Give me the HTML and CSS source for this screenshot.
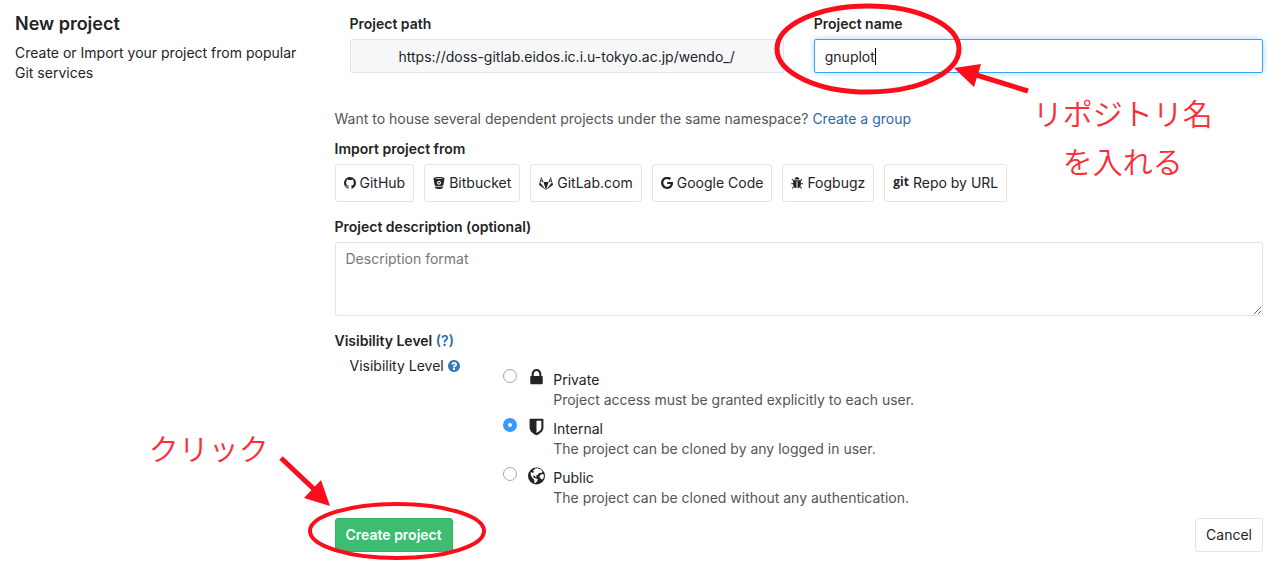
FILE: index.html
```html
<!DOCTYPE html>
<html lang="en">
<head>
<meta charset="utf-8">
<meta name="viewport" content="width=device-width, initial-scale=1">
<title>New project</title>
<link rel="stylesheet" href="styles.css">
</head>
<body>
<main class="page">
  <aside class="intro">
    <h1 class="intro-title">New project</h1>
    <p class="intro-text">Create or Import your project from popular Git services</p>
  </aside>
  <form class="form">
    <div class="fields">
      <div class="field">
        <label class="label" for="path">Project path</label>
        <input class="input input-path" id="path" type="text" value="https://doss-gitlab.eidos.ic.i.u-tokyo.ac.jp/wendo_/" readonly>
      </div>
      <div class="field field-name">
        <label class="label" for="name">Project name</label>
        <input class="input input-active" id="name" type="text" value="gnuplot">
        <span class="caret"></span>
        <svg class="mark mark-name" width="270" height="110" viewBox="0 0 270 110" aria-hidden="true">
          <ellipse class="ring" cx="95" cy="49" rx="91" ry="43"/>
          <path class="shaft" d="M255 91L200 74"/>
          <path class="head" d="M181 68L208 64L201 87Z"/>
        </svg>
        <p class="note note-name" lang="ja">リポジトリ名<br>を入れる</p>
      </div>
    </div>
    <p class="hint">Want to house several dependent projects under the same namespace? <a class="link" href="#group">Create a group</a></p>
    <h2 class="label">Import project from</h2>
    <div class="imports">
      <button class="btn btn-import" type="button"><svg class="icon" viewBox="0 128 1536 1536" aria-hidden="true"><path d="M1536 896q0 251-146.500 451.500t-378.500 277.500q-27 5-39.500-7t-12.500-30v-211q0-97-52-142 57-6 102.500-18t94-39 81-66.500 53-105 20.500-150.500q0-121-79-206 37-91-8-204-28-9-81 11t-92 44l-38 24q-93-26-192-26t-192 26q-16-11-42.500-27t-83.500-38.500-86-13.500q-44 113-7 204-79 85-79 206 0 85 20.500 150t52.500 105 80.500 67 94 39 102.500 18q-40 36-49 103-21 10-45 15t-57 5-65.500-21.500-55.500-62.500q-19-32-48.500-52t-49.500-24l-20-3q-21 0-29 4.500t-5 11.500 9 14 13 12l7 5q22 10 43.500 38t31.500 51l10 23q13 38 44 61.500t67 30 69.500 7 55.500-3.500l23-4q0 38 .5 89t.5 54q0 18-13 30t-40 7q-232-77-378.500-277.500t-146.500-451.500q0-209 103-385.500t279.500-279.500 385.500-103 385.500 103 279.500 279.500 103 385.500z"/></svg>GitHub</button>
      <button class="btn btn-import" type="button"><svg class="icon" viewBox="0 0 12 12" aria-hidden="true"><path fill-rule="evenodd" d="M.5 1.500C.5.500 3 0 6 0s5.500.500 5.500 1.500L10.300 8.200C9.200 9 7.800 9.300 6 9.300S2.800 9 1.700 8.200ZM2 1.600C3 2.200 9 2.200 10 1.600 9 1 3 1 2 1.600ZM6 3.700A2 2 0 1 0 6 7.700A2 2 0 1 0 6 3.700ZM6 4.800A.9.900 0 1 1 6 6.600A.9.900 0 1 1 6 4.800ZM1.900 9.200C3.800 10.300 8.200 10.300 10.100 9.200L9.700 11C8.500 12.300 3.500 12.300 2.300 11Z"/></svg>Bitbucket</button>
      <button class="btn btn-import" type="button"><svg class="icon icon-wide" viewBox="0 71 1792 1650" aria-hidden="true"><path d="M104 706l792 1015-868-630q-18-13-25-34.500t0-42.500zm462 0h660l-330 1015zM335 94l231 612h-198zM335 94q-8-23-33-23t-33 23l-165 612h170zM1688 706l101 308q7 21 0 42.500t-25 34.500l-868 630zM1457 94q8-23 33-23t33 23l165 612h-170zM1457 94l-231 612h198z"/></svg>GitLab.com</button>
      <button class="btn btn-import" type="button"><svg class="icon" viewBox="0 128 1505 1500" aria-hidden="true"><path d="M768 750h725q12 67 12 128 0 217-91 387.500t-259.500 266.500-386.500 96q-157 0-299-60.500t-245-163.500-163.500-245-60.500-299 60.500-299 163.500-245 245-163.500 299-60.500q300 0 515 201l-209 201q-123-119-306-119-129 0-238.500 65t-173.500 176.500-64 243.500 64 243.500 173.500 176.500 238.500 65q87 0 160-24t120-60 82-82 51.500-87 22.500-78h-436v-264z"/></svg>Google Code</button>
      <button class="btn btn-import" type="button"><svg class="icon" viewBox="32 64 1600 1600" aria-hidden="true"><path d="M1632 960q0 26-19 45t-45 19h-224q0 171-67 290l208 209q19 19 19 45t-19 45q-18 19-45 19t-45-19l-198-197q-5 5-15 13t-42 28.500-65 36.500-82 29-97 13v-896h-128v896q-51 0-101.500-13.500t-87-33-66-39-43.500-32.500l-15-14-183 207q-20 21-48 21-24 0-43-16-19-18-20.500-44.500t15.500-46.500l202-227q-58-114-58-274h-224q-26 0-45-19t-19-45 19-45 45-19h224v-294l-173-173q-19-19-19-45t19-45 45-19 45 19l173 173h844l173-173q19-19 45-19t45 19 19 45-19 45l-173 173v294h224q26 0 45 19t19 45zm-480-576h-640q0-133 93.500-226.500t226.500-93.500 226.500 93.500 93.500 226.500z"/></svg>Fogbugz</button>
      <button class="btn btn-import" type="button"><span class="git">git</span>Repo by URL</button>
    </div>
    <label class="label label-desc" for="desc">Project description (optional)</label>
    <textarea class="input textarea" id="desc" placeholder="Description format"></textarea>
    <h2 class="label label-vis">Visibility Level <a class="link" href="#help">(?)</a></h2>
    <div class="visibility">
      <div class="vis-title">Visibility Level <a class="link" href="#help" aria-label="Help"><svg class="help" viewBox="0 128 1536 1536" aria-hidden="true"><path d="M896 1376v-192q0-14-9-23t-23-9h-192q-14 0-23 9t-9 23v192q0 14 9 23t23 9h192q14 0 23-9t9-23zm256-672q0-88-55.500-163t-138.500-116-170-41q-243 0-371 213-15 24 8 42l132 100q7 6 19 6 16 0 25-12 53-68 86-92 34-24 86-24 48 0 85.500 26t37.500 59q0 38-20 61t-68 45q-63 28-115.500 86.500t-52.500 125.500v36q0 14 9 23t23 9h192q14 0 23-9t9-23q0-19 21.500-49.500t54.500-49.500q32-18 49-28.500t46-35 44.500-48 28-60.500 12.500-81zm384 192q0 209-103 385.500t-279.500 279.500-385.500 103-385.500-103-279.500-279.500-103-385.500 103-385.500 279.500-279.500 385.500-103 385.500 103 279.500 279.500 103 385.500z"/></svg></a></div>
      <div class="options">
        <div class="option">
          <input class="radio" type="radio" name="level" id="private">
          <svg class="level" viewBox="-192 128 1536 1664" aria-hidden="true"><path d="M320 768h512v-192q0-106-75-181t-181-75-181 75-75 181v192zm832 96v576q0 40-28 68t-68 28h-960q-40 0-68-28t-28-68v-576q0-40 28-68t68-28h32v-192q0-184 132-316t316-132 316 132 132 316v192h32q40 0 68 28t28 68z"/></svg>
          <label class="option-text" for="private">Private<span class="option-desc">Project access must be granted explicitly to each user.</span></label>
        </div>
        <div class="option">
          <input class="radio" type="radio" name="level" id="internal" checked>
          <svg class="level" viewBox="-128 64 1536 1664" aria-hidden="true"><path d="M1088 960v-640h-448v1137q119-63 213-137 235-184 235-360zm192-768v768q0 86-33.500 170.500t-83 150-118 127.500-126.500 103-121 77.500-89.500 49.500-42.500 20q-12 6-26 6t-26-6q-16-7-42.500-20t-89.500-49.500-121-77.500-126.500-103-118-127.500-83-150-33.500-170.500v-768q0-26 19-45t45-19h1152q26 0 45 19t19 45z"/></svg>
          <label class="option-text" for="internal">Internal<span class="option-desc">The project can be cloned by any logged in user.</span></label>
        </div>
        <div class="option">
          <input class="radio" type="radio" name="level" id="public">
          <svg class="level" viewBox="0 0 17 18" aria-hidden="true"><circle cx="8.500" cy="9" r="8.500"/><path class="land" d="M7 1.700L9.500 1.300L13 2.500L14.500 4.500L13.500 6L12 5.800L10.500 6.600L9.800 8L8 8.300L8.800 9.700L7.600 10L6.800 8.900L5.200 8.300L5.500 10.500L7.500 11.200L9.800 12L9.300 14L7.500 16.100L6.300 15.700L6.400 13L5 11.500L3.400 9.500L2.600 7L3 5L4.800 6L6 5.100L5 3.800ZM12.300 8L15 6.800L16 9L15.200 11.700L13.800 12.500L12 11L11.500 9.500Z"/></svg>
          <label class="option-text" for="public">Public<span class="option-desc">The project can be cloned without any authentication.</span></label>
        </div>
      </div>
    </div>
    <div class="actions">
      <div class="create">
        <button class="btn btn-create" type="submit">Create project</button>
        <svg class="mark mark-create" width="220" height="120" viewBox="0 0 220 120" aria-hidden="true">
          <ellipse class="ring ring-small" cx="123" cy="82" rx="87" ry="27"/>
          <path class="shaft" d="M7 9L43 43"/>
          <path class="head" d="M56 57L30 49L47 31Z"/>
        </svg>
        <p class="note note-create" lang="ja">クリック</p>
      </div>
      <button class="btn" type="button">Cancel</button>
    </div>
  </form>
</main>
</body>
</html>
```
FILE: styles.css
```css
* { box-sizing: border-box; }
body {
  margin: 0;
  background: #fff;
  color: #242426;
  font-family: Inter, "Noto Sans CJK JP", sans-serif;
  font-size: 14px;
  line-height: 20px;
}
h1, h2, p { margin: 0; }
.page {
  display: grid;
  grid-template-columns: 1fr 3fr;
  padding: 14px 8px 20px 0;
}
.intro { padding: 0 15px; }
.intro-title { font-size: 18px; font-weight: 600; line-height: 20px; margin-bottom: 9px; }
.form { min-width: 0; padding: 0 15px; }
.fields { display: grid; grid-template-columns: 1fr 1fr; }
.field { padding: 0 15px; }
.field-name { position: relative; padding-right: 0; }
.label { display: block; margin: 0 0 5px; font-size: 14px; font-weight: 600; line-height: 20px; }
.input {
  display: block;
  width: 100%;
  height: 34px;
  padding: 6px 10px;
  border: 1px solid #e3e4e6;
  border-radius: 2px;
  background: #fff;
  color: #242426;
  font: inherit;
  outline: none;
}
.input-path { padding-left: 48px; background: #f6f7f9; }
.input-active { border-color: #38a5ee; box-shadow: 0 0 6px #a9d8f8; }
.caret { position: absolute; left: 76px; top: 34px; width: 1px; height: 17px; background: #000; }
.hint { margin: 36px 0 10px; color: #555; }
.link { color: #3067a6; text-decoration: none; }
.imports { display: flex; flex-wrap: wrap; gap: 10px; }
.btn {
  height: 34px;
  padding: 0 10px;
  border: 1px solid #e3e4e6;
  border-radius: 3px;
  background: #fff;
  color: #242426;
  font: inherit;
  white-space: nowrap;
}
.btn-import { display: flex; align-items: center; gap: 4px; height: 38px; padding: 0 8px; }
.icon { width: 12px; height: 12px; fill: currentColor; }
.icon-wide { width: 14px; height: 13px; }
.git { font-family: "Open Sans", sans-serif; font-size: 12px; font-weight: 700; line-height: 16px; padding-bottom: 2px; }
.label-desc { margin-top: 15px; }
.textarea { height: 74px; resize: vertical; }
.textarea::placeholder { color: #777; opacity: 1; }
.label-vis { margin-top: 15px; }
.visibility { display: grid; grid-template-columns: 1fr 5fr; }
.vis-title { padding-left: 15px; white-space: nowrap; }
.help { width: 12px; height: 12px; fill: #337ab7; vertical-align: -1px; }
.options { display: grid; gap: 9px; padding: 13px 0 0 14px; }
.option { display: flex; align-items: flex-start; }
.radio {
  appearance: none;
  width: 14px;
  height: 14px;
  margin: 0 11px 0 0;
  border: 1px solid #a5a5a5;
  border-radius: 50%;
  background: #fff;
}
.radio:checked { border: 5px solid #3b99fc; }
.level { width: 17px; height: 18px; margin-right: 8px; fill: #242426; }
.land { fill: #fff; }
.option-text { display: block; padding-top: 1px; margin-bottom: -1px; }
.option-desc { display: block; color: #555; }
.actions { display: flex; justify-content: space-between; margin-top: 11px; }
.create { position: relative; }
.btn-create { border-color: #38ae67; background: #3cbd70; color: #fff; font-weight: 600; }
.mark { position: absolute; overflow: visible; pointer-events: none; }
.mark-name { left: -26px; top: -14px; }
.mark-create { left: -61px; top: -69px; }
.ring { fill: none; stroke: #fc0d1b; stroke-width: 5px; }
.ring-small { stroke-width: 4px; }
.shaft { stroke: #fc0d1b; stroke-width: 5px; }
.head { fill: #fc0d1b; }
.note {
  position: absolute;
  color: #fc2d38;
  font-family: "Noto Sans CJK JP", sans-serif;
  font-size: 30px;
  font-weight: 350;
  line-height: 48px;
  text-align: center;
  white-space: nowrap;
}
.note-name { left: 234px; top: 74px; }
.note-create { right: 184px; bottom: 81px; }
```
